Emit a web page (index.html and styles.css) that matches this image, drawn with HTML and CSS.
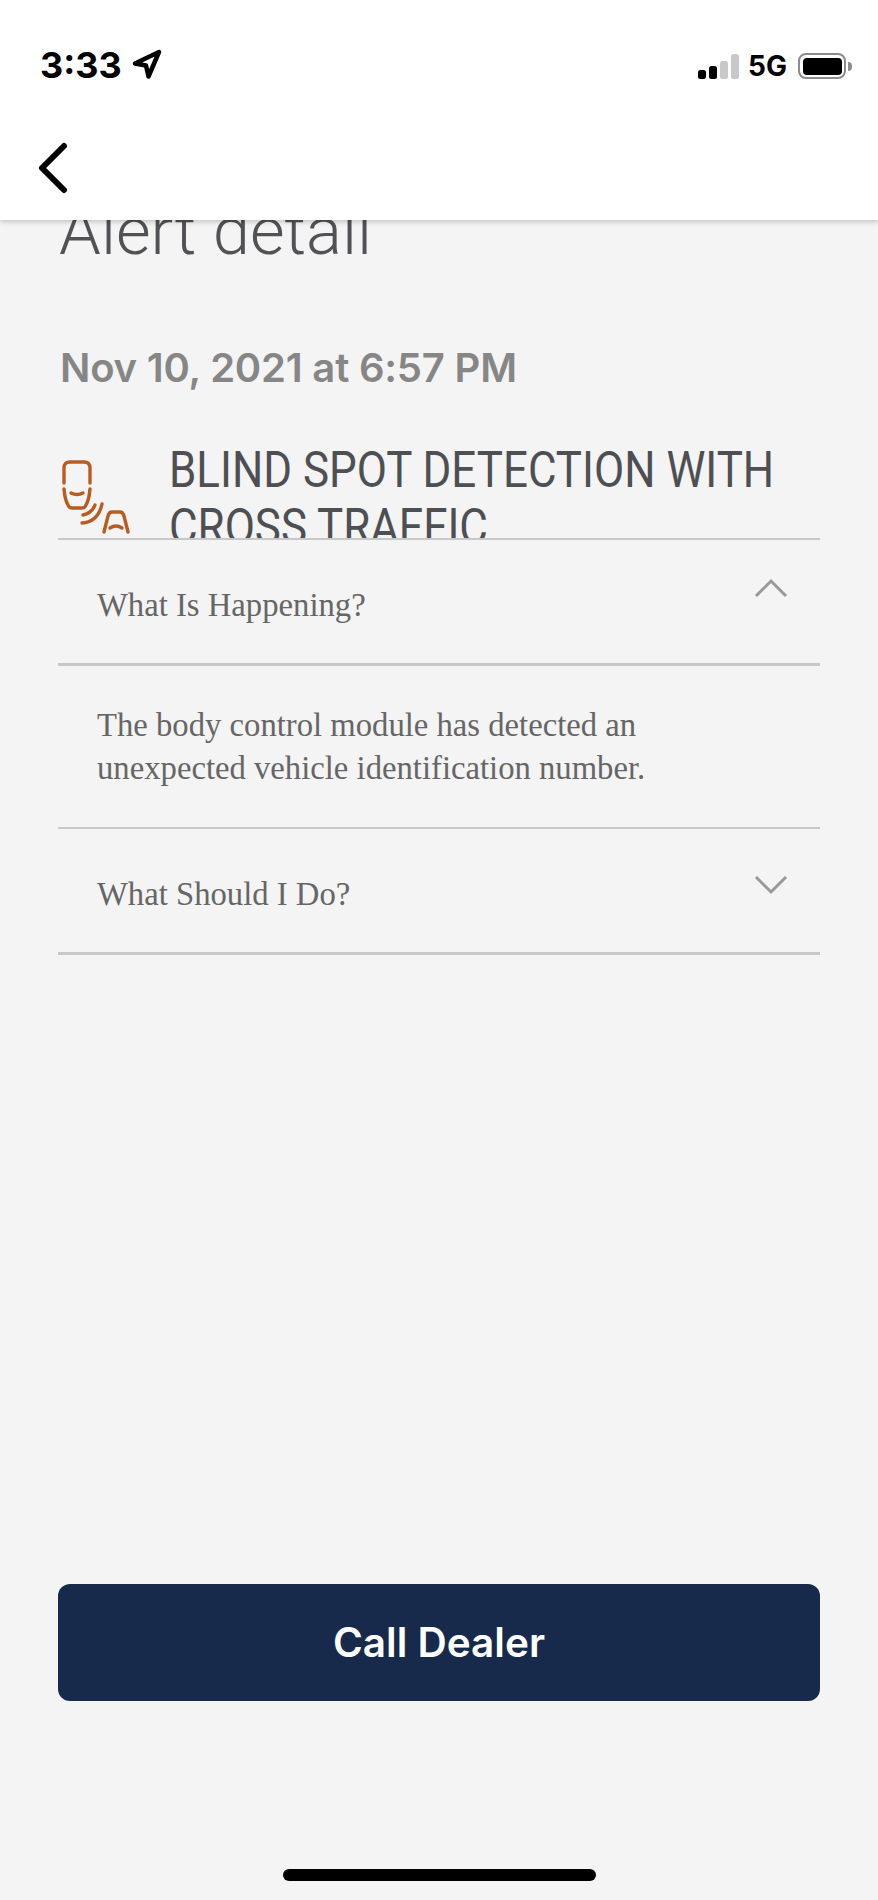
FILE: index.html
```html
<!DOCTYPE html>
<html lang="en">
<head>
<meta charset="utf-8">
<title>Alert detail</title>
<link rel="stylesheet" href="styles.css">
</head>
<body>
<div class="screen">
  <header class="topbar">
    <div class="status">
      <div class="status-left">
        <span class="time">3:33</span>
        <svg class="loc" width="30" height="30" viewBox="0 0 30 30"><path d="M3 14.5 L27 3 L16.5 27.5 L14 16.5 Z" fill="none" stroke="#000" stroke-width="4.5" stroke-linejoin="round"/></svg>
      </div>
      <div class="status-right">
        <div class="signal"><i class="b1"></i><i class="b2"></i><i class="b3"></i><i class="b4"></i></div>
        <span class="net">5G</span>
        <div class="battery"><div class="battery-fill"></div></div>
        <div class="battery-nub"></div>
      </div>
    </div>
    <div class="nav">
      <svg width="32" height="52" viewBox="0 0 32 52"><path d="M27 4 L5 26 L27 48" fill="none" stroke="#000" stroke-width="6" stroke-linecap="round" stroke-linejoin="round"/></svg>
    </div>
  </header>
  <main class="content">
    <h1 class="title">Alert detail</h1>
    <p class="date">Nov 10, 2021 at 6:57 PM</p>
    <div class="alert">
      <svg class="alert-icon" width="72" height="78" viewBox="0 0 72 78" fill="none" stroke="#b85c22" stroke-width="3.4" stroke-linecap="round" stroke-linejoin="round">
        <path d="M4 23 V8 Q4 2 10 2 H24 Q30 2 30 8 V23"/>
        <path d="M4 29 Q5 40 8 45 Q9 48 12 48 H22 Q25 48 26 45 Q29 40 30 29"/>
        <path d="M11 33 Q17 36 23 33"/>
        <path d="M23 55 Q32 53 35 45"/>
        <path d="M22 63 Q38 62 42 44"/>
        <path d="M44 72 L48 56 Q49 52 52 52 H60 Q63 52 64 56 L68 72"/>
        <path d="M50 68 Q56 64 62 68"/>
      </svg>
      <h2 class="alert-title">BLIND SPOT DETECTION WITH CROSS TRAFFIC</h2>
    </div>
    <section class="accordion">
      <div class="row">
        <span class="row-label">What Is Happening?</span>
        <svg class="chev-up" width="34" height="20" viewBox="0 0 34 20"><path d="M2 18 L17 3 L32 18" fill="none" stroke="#999" stroke-width="3"/></svg>
      </div>
      <div class="panel">The body control module has detected an unexpected vehicle identification number.</div>
      <div class="row">
        <span class="row-label">What Should I Do?</span>
        <svg class="chev-down" width="34" height="20" viewBox="0 0 34 20"><path d="M2 2 L17 17 L32 2" fill="none" stroke="#999" stroke-width="3"/></svg>
      </div>
    </section>
    <button class="call" type="button">Call Dealer</button>
  </main>
  <div class="home-wrap"><div class="home"></div></div>
</div>
</body>
</html>
```
FILE: styles.css
```css
* { box-sizing: border-box; }
html, body { margin: 0; padding: 0; }
body { background: #f4f4f4; font-family: "Inter", "Liberation Sans", sans-serif; }
.screen { height: 1900px; width: 878px; overflow: hidden; display: flex; flex-direction: column; }

.topbar {
  height: 220px; flex: none; background: #fff;
  position: relative; z-index: 2;
  box-shadow: 0 2px 5px rgba(0,0,0,.2);
  display: flex; flex-direction: column;
}
.status { height: 130px; padding: 46px 26px 0 40px; display: flex; justify-content: space-between; align-items: flex-start; }
.status-left { display: flex; align-items: center; gap: 10px; }
.time { font-size: 36px; font-weight: 700; line-height: 38px; color: #000; }
.loc { margin-top: -3px; }
.status-right { display: flex; align-items: center; padding-top: 5px; }
.signal { display: flex; align-items: flex-end; gap: 3px; height: 26px; margin-right: 9px; }
.signal i { display: block; width: 8px; border-radius: 2.5px; }
.b1 { height: 9px; background: #000; }
.b2 { height: 13px; background: #000; }
.b3 { height: 18px; background: #c8c8c8; }
.b4 { height: 25px; background: #c8c8c8; }
.net { font-size: 28px; font-weight: 700; line-height: 30px; color: #000; margin-right: 11px; }
.battery { width: 48px; height: 26px; border: 2.5px solid #8c8c8c; border-radius: 8px; padding: 2.5px; }
.battery-fill { width: 100%; height: 100%; background: #000; border-radius: 4px; }
.battery-nub { width: 4px; height: 9px; background: #8c8c8c; border-radius: 0 4px 4px 0; margin-left: 2px; }
.nav { padding: 12px 0 0 37px; height: 90px; }
.nav svg { display: block; }

.content { flex: 1; padding: 0 58px; position: relative; z-index: 1; display: flex; flex-direction: column; }
.title {
  margin: -25px 0 0 1px; font-family: "Roboto", sans-serif; font-weight: 300;
  font-size: 67px; line-height: 72px; color: #505256; height: 72px; white-space: nowrap;
}
.date { margin: 79px 0 0 2px; font-size: 40px; font-weight: 600; line-height: 44px; color: #868686; letter-spacing: -.2px; }
.alert { height: 130px; margin-top: 18px; overflow: hidden; display: flex; align-items: flex-start; flex: none; }
.alert-icon { flex: none; margin: 52px 0 0 2px; }
.alert-title {
  flex: none; width: 700px; margin: 34px 0 0 37px; font-family: "Roboto", sans-serif; font-weight: 400;
  font-size: 50px; line-height: 57px; color: #4d4f53;
  transform: scaleX(.878); transform-origin: 0 0;
}
.accordion { border-top: 2px solid #c8c8c8; flex: none; }
.row { height: 126px; border-bottom: 3px solid #c8c8c8; padding: 0 32px 0 39px; display: flex; justify-content: space-between; align-items: flex-start; }
.row-label { font-family: "Liberation Serif", serif; font-size: 32.7px; line-height: 38px; color: #666; margin-top: 46px; }
.chev-up { margin-top: 38px; }
.chev-down { margin-top: 46px; }
.panel { height: 163px; padding: 38px 100px 0 39px; border-bottom: 2px solid #c8c8c8; font-family: "Liberation Serif", serif; font-size: 32.7px; line-height: 42.5px; color: #666; }
.call {
  margin-top: 629px; height: 117px; width: 100%; flex: none; border: 0; border-radius: 12px;
  background: #182a4c; color: #fff; font-family: "Inter", sans-serif; font-size: 40.5px; font-weight: 600;
}
.home-wrap { position: absolute; left: 0; right: 0; top: 1869px; display: flex; justify-content: center; z-index: 3; }
.home { width: 313px; height: 12px; background: #000; border-radius: 6px; margin-left: 1px; }
```
